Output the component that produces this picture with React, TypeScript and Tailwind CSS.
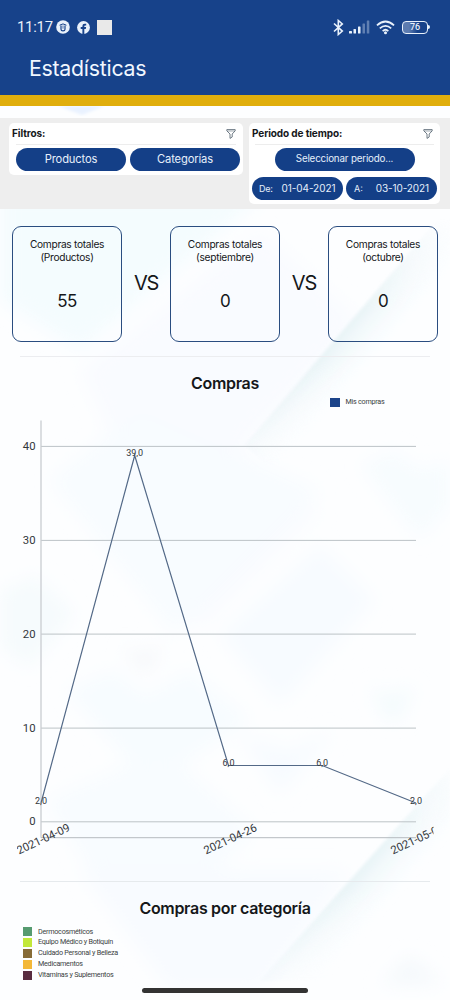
import React from 'react';

interface StatCardProps {
  label: string;
  detail: string;
  value: number;
}

interface ChartPoint {
  x: number;
  y: number;
  label: string;
}

const points: ChartPoint[] = [
  { x: 41, y: 388, label: '2,0' },
  { x: 134.7, y: 40.5, label: '39,0' },
  { x: 228.5, y: 350.5, label: '6,0' },
  { x: 322.2, y: 350.5, label: '6,0' },
  { x: 416, y: 388, label: '2,0' },
];

const gridLines = [
  { value: 40, y: 31.4 },
  { value: 30, y: 125.4 },
  { value: 20, y: 219.1 },
  { value: 10, y: 313.1 },
  { value: 0, y: 406.8 },
];

const dates = [
  { text: '2021-04-09', x: 19, y: 439.5 },
  { text: '2021-04-26', x: 206, y: 439.5 },
  { text: '2021-05-03', x: 393, y: 439.5 },
];

const categories = [
  { name: 'Dermocosméticos', color: 'bg-[#569b70]' },
  { name: 'Equipo Médico y Botiquín', color: 'bg-[#c2e83a]' },
  { name: 'Cuidado Personal y Belleza', color: 'bg-[#866b36]' },
  { name: 'Medicamentos', color: 'bg-[#f3b839]' },
  { name: 'Vitaminas y Suplementos', color: 'bg-[#592c40]' },
];

const FilterIcon = () => (
  <svg className="h-[10px] w-[10px]" viewBox="0 0 10 10" fill="none" stroke="#4b5a68" strokeWidth="0.8" strokeLinejoin="round">
    <path d="M0.8 0.6h8.4v1.2L6.2 5v3L4 9.4V5L0.8 1.8z" />
    <path d="M1.2 2h7.6" strokeWidth="0.5" />
  </svg>
);

const Background = () => (
  <svg className="absolute inset-0 h-full w-full" viewBox="0 0 450 1000" preserveAspectRatio="none">
    <defs>
      <filter id="soft" x="-20%" y="-20%" width="140%" height="140%">
        <feGaussianBlur stdDeviation="9" />
      </filter>
      <filter id="edge" x="-10%" y="-10%" width="120%" height="120%">
        <feGaussianBlur stdDeviation="1.5" />
      </filter>
      <linearGradient id="upperBand" gradientUnits="userSpaceOnUse" x1="313" y1="365" x2="348" y2="395">
        <stop offset="0" stopColor="#e8f3f6" />
        <stop offset="1" stopColor="#f8fdff" stopOpacity="0" />
      </linearGradient>
      <linearGradient id="lowerBand" gradientUnits="userSpaceOnUse" x1="345" y1="888" x2="380" y2="918">
        <stop offset="0" stopColor="#e9f4f7" />
        <stop offset="1" stopColor="#f8fdff" stopOpacity="0" />
      </linearGradient>
      <linearGradient id="fade" x1="0" y1="0" x2="0" y2="1">
        <stop offset="0.05" stopColor="#000" />
        <stop offset="0.4" stopColor="#fff" />
        <stop offset="0.6" stopColor="#fff" />
        <stop offset="1" stopColor="#333" />
      </linearGradient>
      <mask id="upperMask" maskUnits="userSpaceOnUse" x="200" y="205" width="250" height="300">
        <rect x="200" y="205" width="250" height="260" fill="url(#fade)" />
      </mask>
      <mask id="lowerMask" maskUnits="userSpaceOnUse" x="200" y="750" width="250" height="235">
        <rect x="200" y="750" width="250" height="232" fill="url(#fade)" />
      </mask>
    </defs>
    <rect width="450" height="1000" fill="#fdfeff" />
    <g filter="url(#soft)">
      <path d="M0 190h270L80 350 0 300z" fill="#f4fcfe" />
      <path d="M80 370L260 230l100 90-120 130 80 60-120 120z" fill="#f9fbff" />
      <path d="M50 480l90-70 180 80-145 145z" fill="#f8fcff" />
      <path d="M220 635l100-90 55 55-95 105z" fill="#f7fbff" />
      <path d="M0 590l35-15 40 38-45 55-30-20z" fill="#f6fbfd" />
      <path d="M65 690l50-20 30 25 45-25 60 50-100 65z" fill="#f7fcff" />
      <path d="M45 800l120-50 90 80-75 80-90-40z" fill="#f8fcff" />
      <path d="M360 465l35-15 25 20 30-10v45l-30 35z" fill="#f7fcfe" />
      <path d="M240 735l50 15 45-20-55 65z" fill="#f7fbff" />
      <path d="M80 870h270l-90 120h-90z" fill="#f8fbff" />
      <path d="M370 685l20 10 25-10-14 35h-16z" fill="#f4fbfd" />
      <path d="M120 645l20 9 25-9-20 30z" fill="#f5f7fa" />
      <path d="M380 985l30-30 35 30z" fill="#f5f9fc" />
    </g>
    <path d="M58 106h46l-22 9z" fill="#e9f2ff" filter="url(#edge)" />
    <g mask="url(#upperMask)">
      <path d="M450 205L245 445l50 45 155-180z" fill="url(#upperBand)" filter="url(#edge)" />
    </g>
    <g mask="url(#lowerMask)">
      <path d="M450 768L260 981h80l110-120z" fill="url(#lowerBand)" filter="url(#edge)" />
    </g>
  </svg>
);

const StatusBar = () => (
  <div className="flex h-[54px] items-center justify-between pl-[17px] pr-[20px] text-[#e9f1fb]">
    <div className="flex items-center">
      <span className="w-[39px] whitespace-nowrap font-[family-name:Roboto] text-[14.8px] tracking-[-0.2px]">11:17</span>
      <svg className="h-[14px] w-[14px]" viewBox="0 0 14 14">
        <circle cx="7" cy="7" r="6.8" fill="#e9f1fb" />
        <path d="M3.6 5.2Q7 2.6 10.4 5.2" fill="none" stroke="#17428a" strokeWidth="1" />
        <path d="M5 5.4v3.9q0 1.6 2 1.6t2-1.6V5.4" fill="none" stroke="#17428a" strokeWidth="1.2" />
        <path d="M7 5.5v3.2" stroke="#17428a" strokeWidth="0.7" />
      </svg>
      <svg className="ml-[7px] h-[13px] w-[13px]" viewBox="0 0 13 13">
        <circle cx="6.5" cy="6.5" r="6.4" fill="#e9f1fb" />
        <path d="M5.4 13V8H3.7V6.1h1.7V4.9Q5.4 2.7 7.7 2.7h1.5v1.7H8.1q-.8 0-.8.8v.9h1.8L8.8 8H7.3v5z" fill="#17428a" />
      </svg>
      <span className="ml-[7px] h-[15px] w-[15px] bg-[#e9e9e9]" />
    </div>
    <div className="flex items-center">
      <svg className="mr-[-1px] h-[17px] w-[11px]" viewBox="0 0 11 17" fill="none" stroke="currentColor" strokeWidth="1.6">
        <path d="M1 4.5l8.3 7.6L5.3 15.5v-14l4 3.4L1 12.5" />
      </svg>
      <svg className="ml-[6px] h-[14px] w-[21px]" viewBox="0 0 21 14" fill="currentColor">
        <rect x="0" y="11" width="3" height="2.5" rx="0.5" />
        <rect x="4.5" y="9" width="2.5" height="4.5" rx="0.5" />
        <rect x="9" y="6.5" width="2.5" height="7" rx="0.5" />
        <rect x="13.5" y="3.5" width="2.5" height="10" rx="0.5" opacity="0.35" />
        <rect x="17.8" y="0.5" width="2.5" height="13" rx="0.5" opacity="0.35" />
      </svg>
      <svg className="ml-[6px] h-[15px] w-[19px]" viewBox="0 0 20 15" fill="none" stroke="currentColor" strokeWidth="1.8">
        <path d="M1 5.2Q10-2.8 19 5.2M4 8.4Q10 3 16 8.4M7 11.2q3-2.7 6 0" />
        <circle cx="10" cy="13" r="1.6" fill="currentColor" stroke="none" />
      </svg>
      <div className="ml-[7px] flex items-center">
        <div className="flex h-[13px] w-[26px] items-center justify-center rounded-[4px] border-[1.5px] border-[#e9f1fb] bg-linear-to-r from-[#5c7bb0] from-25% to-[#17428a] to-60% font-[family-name:Roboto] text-[9px] font-medium leading-none">
          76
        </div>
        <span className="h-[4px] w-[2px] rounded-r-sm bg-[#e9f1fb]" />
      </div>
    </div>
  </div>
);

const StatCard: React.FC<StatCardProps> = ({ label, detail, value }) => (
  <div className="flex h-[116px] w-[110px] flex-col items-center rounded-[9px] border-[1.4px] border-[#2a4d80] pt-[11px]">
    <p className="text-center text-[10.2px] leading-[12.5px] tracking-[-0.3px] whitespace-nowrap">
      {label}
      <br />
      {detail}
    </p>
    <p className="mt-[26px] text-[17px] leading-[24px] tracking-[-0.6px]">{value}</p>
  </div>
);

const Versus = () => <span className="pb-[2px] text-[20px] tracking-[-1.2px]">VS</span>;

const LineChart = () => (
  <svg className="block h-[450px] w-[450px] font-[family-name:Roboto]" viewBox="0 0 450 450">
    <defs>
      <clipPath id="plot">
        <rect x="17" y="0" width="416.5" height="450" />
      </clipPath>
    </defs>
    {gridLines.map(line => (
      <g key={line.value}>
        <path d={`M41 ${line.y}H416`} stroke="#bcc3c7" strokeWidth="1" />
        <text x="35.5" y={line.y + 3.4} textAnchor="end" fontSize="11.3" fill="#33373b">{line.value}</text>
      </g>
    ))}
    <path d="M41 5.5V422.7" stroke="#c9cdd1" strokeWidth="1.3" />
    <path d="M41 422.7H416" stroke="#b6bbbf" strokeWidth="1" />
    <polyline
      points={points.map(p => `${p.x},${p.y}`).join(' ')}
      fill="none"
      stroke="#536987"
      strokeWidth="1.2"
    />
    {points.map(p => (
      <text key={p.x} x={p.x} y={p.y + 0.6} textAnchor="middle" fontSize="9" fill="#33373b">{p.label}</text>
    ))}
    <g clipPath="url(#plot)" fontSize="11.3" fill="#33373b">
      {dates.map(date => (
        <text key={date.text} x={date.x} y={date.y} transform={`rotate(-25 ${date.x} ${date.y})`}>{date.text}</text>
      ))}
    </g>
  </svg>
);

export default function App() {
  return (
    <div className="relative h-[1000px] w-[450px] overflow-hidden bg-white font-['Inter',sans-serif] text-[#15171a]">
      <Background />
      <div className="relative flex h-full flex-col">
        <header className="h-[105.5px] shrink-0 border-b-[11.5px] border-[#e0ae0d] bg-[#17428a]">
          <StatusBar />
          <h1 className="pl-[29px] text-[21.3px] leading-[29px] tracking-[-0.25px] text-[#f1f7ff]">Estadísticas</h1>
        </header>

        <section className="mt-[12px] flex h-[91.5px] shrink-0 items-start gap-[6px] bg-[#eeeeee] pl-[9px] pt-[5.5px]">
          <div className="h-[52px] w-[234px] rounded-[5px] bg-white px-[3px]">
            <div className="mr-[4px] flex h-[21px] items-center justify-between">
              <h2 className="text-[10px] font-bold tracking-[-0.1px]">Filtros:</h2>
              <FilterIcon />
            </div>
            <div className="mx-[4px] border-t border-[#ededed]" />
            <div className="ml-[4px] mt-[3px] flex gap-[4px] text-[11.2px] tracking-[-0.15px] text-[#e6effb]">
              <button className="h-[23px] w-[110px] rounded-full bg-[#143f87]">Productos</button>
              <button className="h-[23px] w-[110px] rounded-full bg-[#143f87]">Categorías</button>
            </div>
          </div>
          <div className="h-[81px] w-[191px] rounded-[5px] bg-white px-[3px]">
            <div className="mr-[4px] flex h-[21px] items-center justify-between">
              <h2 className="text-[10px] font-bold tracking-[-0.1px]">Periodo de tiempo:</h2>
              <FilterIcon />
            </div>
            <div className="mx-[3px] border-t border-[#ededed]" />
            <div className="mt-[3px] flex justify-center text-[#e6effb]">
              <button className="h-[23px] w-[140px] rounded-full bg-[#143f87] text-[9.8px] tracking-[-0.18px]">Seleccionar periodo...</button>
            </div>
            <div className="mt-[6px] flex gap-[3px] text-[10px] text-[#e6effb]">
              <button className="flex h-[23px] w-[91px] shrink-0 items-center justify-between rounded-full bg-[#143f87] pl-[7px] pr-[7.5px]">
                <span className="text-[9px] tracking-[-0.2px]">De:</span>
                <span className="tracking-[-0.05px]">01-04-2021</span>
              </button>
              <button className="flex h-[23px] w-[91px] shrink-0 items-center justify-between rounded-full bg-[#143f87] pl-[8px] pr-[8px]">
                <span className="text-[9px]">A:</span>
                <span className="tracking-[-0.1px]">03-10-2021</span>
              </button>
            </div>
          </div>
        </section>

        <section className="mt-[17px] flex shrink-0 items-center justify-between px-[12px]">
          <StatCard label="Compras totales" detail="(Productos)" value={55} />
          <Versus />
          <StatCard label="Compras totales" detail="(septiembre)" value={0} />
          <Versus />
          <StatCard label="Compras totales" detail="(octubre)" value={0} />
        </section>

        <section className="mt-[14px] h-[525px] shrink-0">
          <div className="mx-[20px] border-t border-[#ecedf0]" />
          <h2 className="mt-[14px] text-center text-[16px] font-semibold leading-[24px] tracking-[-0.3px]">Compras</h2>
          <div className="ml-[330px] mt-[2px] flex h-[10px] items-center gap-[6px] font-[family-name:Roboto] text-[7.2px] text-[#3a3e42]">
            <span className="h-[9px] w-[9.5px] bg-[#1c448a]" />
            <span className="tracking-[-0.25px]">Mis compras</span>
          </div>
          <div className="mt-[8px]">
            <LineChart />
          </div>
        </section>

        <section className="h-[101px] shrink-0 overflow-hidden">
          <div className="mx-[20px] border-t border-[#e6eaed]" />
          <h2 className="mt-[14px] text-center text-[16px] font-semibold leading-[24px] tracking-[-0.3px]">Compras por categoría</h2>
          <ul className="ml-[23px] mt-[7.4px] flex flex-col gap-[1.9px] font-[family-name:Roboto] text-[7.2px] text-[#3a3e42]">
            {categories.map(category => (
              <li key={category.name} className="flex h-[9px] items-center gap-[6px]">
                <span className={`h-[9px] w-[9px] ${category.color}`} />
                <span className="tracking-[-0.25px]">{category.name}</span>
              </li>
            ))}
            <li className="h-[9px] w-[9px] bg-[#fce4cb]" />
          </ul>
        </section>
        <div className="mx-auto mt-[6px] h-[4.5px] w-[166px] shrink-0 rounded-full bg-[#333333]" />
      </div>
    </div>
  );
}
